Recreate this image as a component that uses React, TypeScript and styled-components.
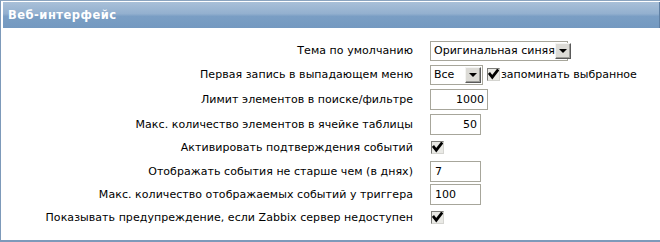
import React from "react";
import styled, { createGlobalStyle } from "styled-components";

const Global = createGlobalStyle`
  html, body { margin: 0; padding: 0; background: #fff; }
  body { font-family: "DejaVu Sans", Verdana, sans-serif; font-size: 11px; color: #000; }
`;

const Frame = styled.div`
  width: 660px;
  height: 242px;
  box-sizing: border-box;
  border-top: 1px solid #8ba4bf;
  border-left: 1px solid #7d9aba;
  border-bottom: 2px solid #7d9aba;
  padding: 1px 0 0 1px;
  display: flex;
  flex-direction: column;
  background: #fff;
`;

const Header = styled.div`
  height: 26px;
  margin-left: 1px;
  box-sizing: border-box;
  background: linear-gradient(to bottom, #a9c0d8 0%, #93b0cf 45%, #7a9ec4 55%, #7499c0 100%);
  border-right: 1px solid #5f7fa3;
  display: flex;
  align-items: center;
  padding-left: 5px;
  color: #fff;
  font-weight: bold;
  font-size: 11.5px;
  letter-spacing: 0.5px;
`;

const Body = styled.div`
  padding-top: 11px;
  display: flex;
  flex-direction: column;
`;

const Row = styled.div<{ $h: number }>`
  height: ${(p) => p.$h}px;
  display: flex;
  align-items: center;
`;

const Label = styled.div`
  width: 411px;
  text-align: right;
  white-space: nowrap;
  padding-right: 17px;
  letter-spacing: 0.05px;
`;

const Control = styled.div`
  display: flex;
  align-items: center;
`;

const SelectBox = styled.div<{ $w: number }>`
  width: ${(p) => p.$w}px;
  height: 20px;
  box-sizing: border-box;
  border: 1px solid #a7a69b;
  background: #fff;
  display: flex;
  align-items: center;
  justify-content: space-between;
  padding: 1px 1px 1px 3px;
`;

const SelectText = styled.span`
  white-space: nowrap;
`;

const DropButton = styled.span`
  width: 16px;
  height: 16px;
  flex: none;
  box-sizing: border-box;
  background: #dcdbd6;
  border-style: solid;
  border-width: 1px;
  border-color: #f4f4f2 #5a5a5a #5a5a5a #f4f4f2;
  box-shadow: inset -1px -1px 0 #9c9c98;
  display: flex;
  align-items: center;
  justify-content: center;
`;

const Arrow = styled.span`
  width: 0;
  height: 0;
  border-left: 4px solid transparent;
  border-right: 4px solid transparent;
  border-top: 4px solid #000;
  margin-top: 1px;
`;

const Input = styled.div<{ $w: number; $right?: boolean }>`
  width: ${(p) => p.$w}px;
  height: 21px;
  box-sizing: border-box;
  border: 1px solid #a7a69b;
  background: #fff;
  display: flex;
  align-items: center;
  justify-content: ${(p) => (p.$right ? "flex-end" : "flex-start")};
  padding: 0 3px 0 4px;
`;

const Check = styled.span<{ $ml?: number }>`
  width: 13px;
  height: 13px;
  flex: none;
  box-sizing: border-box;
  margin-left: ${(p) => p.$ml ?? 1}px;
  border-style: solid;
  border-width: 1px;
  border-color: #7e7e7a #d4d4d0 #d4d4d0 #7e7e7a;
  background: #e9e9e5;
  display: inline-flex;
  align-items: center;
  justify-content: center;
`;

const CheckLabel = styled.span`
  margin-left: 1px;
  white-space: nowrap;
`;

const Tick = () => (
  <svg width="11" height="11" viewBox="0 0 11 11">
    <polyline
      points="1.8,5 4.3,8.2 9.4,1.6"
      fill="none"
      stroke="#000"
      strokeWidth="2.8"
      strokeLinecap="square"
      strokeLinejoin="miter"
    />
  </svg>
);

const Select = ({ w, text }: { w: number; text: string }) => (
  <SelectBox $w={w}>
    <SelectText>{text}</SelectText>
    <DropButton>
      <Arrow />
    </DropButton>
  </SelectBox>
);

export default function App() {
  return (
    <>
      <Global />
      <Frame>
        <Header>Веб-интерфейс</Header>
        <Body>
          <Row $h={23}>
            <Label>Тема по умолчанию</Label>
            <Control>
              <Select w={138} text="Оригинальная синяя" />
            </Control>
          </Row>
          <Row $h={25}>
            <Label>Первая запись в выпадающем меню</Label>
            <Control>
              <Select w={53} text="Все" />
              <Check $ml={4}>
                <Tick />
              </Check>
              <CheckLabel>запоминать выбранное</CheckLabel>
            </Control>
          </Row>
          <Row $h={25}>
            <Label>Лимит элементов в поиске/фильтре</Label>
            <Control>
              <Input $w={58} $right>1000</Input>
            </Control>
          </Row>
          <Row $h={24}>
            <Label>Макс. количество элементов в ячейке таблицы</Label>
            <Control>
              <Input $w={51} $right>50</Input>
            </Control>
          </Row>
          <Row $h={23}>
            <Label>Активировать подтверждения событий</Label>
            <Control>
              <Check>
                <Tick />
              </Check>
            </Control>
          </Row>
          <Row $h={24}>
            <Label>Отображать события не старше чем (в днях)</Label>
            <Control>
              <Input $w={51}>7</Input>
            </Control>
          </Row>
          <Row $h={23}>
            <Label>Макс. количество отображаемых событий у триггера</Label>
            <Control>
              <Input $w={51}>100</Input>
            </Control>
          </Row>
          <Row $h={23}>
            <Label>Показывать предупреждение, если Zabbix сервер недоступен</Label>
            <Control>
              <Check>
                <Tick />
              </Check>
            </Control>
          </Row>
        </Body>
      </Frame>
    </>
  );
}
